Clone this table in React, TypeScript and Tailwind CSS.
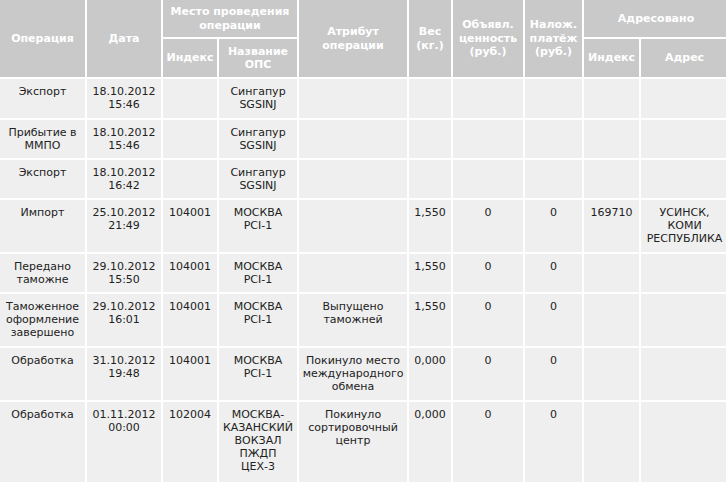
import React from "react";

type Row = { h: string; cells: string[] };

const rows: Row[] = [
  { h: "h-[39px]", cells: ["Экспорт", "18.10.2012\n15:46", "", "Сингапур\nSGSINJ", "", "", "", "", "", ""] },
  { h: "h-[38px]", cells: ["Прибытие в\nММПО", "18.10.2012\n15:46", "", "Сингапур\nSGSINJ", "", "", "", "", "", ""] },
  { h: "h-[38px]", cells: ["Экспорт", "18.10.2012\n16:42", "", "Сингапур\nSGSINJ", "", "", "", "", "", ""] },
  { h: "h-[52px]", cells: ["Импорт", "25.10.2012\n21:49", "104001", "МОСКВА\nPCI-1", "", "1,550", "0", "0", "169710", "УСИНСК,\nКОМИ\nРЕСПУБЛИКА"] },
  { h: "h-[37px]", cells: ["Передано\nтаможне", "29.10.2012\n15:50", "104001", "МОСКВА\nPCI-1", "", "1,550", "0", "0", "", ""] },
  { h: "h-[52px]", cells: ["Таможенное\nоформление\nзавершено", "29.10.2012\n16:01", "104001", "МОСКВА\nPCI-1", "Выпущено\nтаможней", "1,550", "0", "0", "", ""] },
  { h: "h-[52px]", cells: ["Обработка", "31.10.2012\n19:48", "104001", "МОСКВА\nPCI-1", "Покинуло место\nмеждународного\nобмена", "0,000", "0", "0", "", ""] },
  { h: "h-[80px]", cells: ["Обработка", "01.11.2012\n00:00", "102004", "МОСКВА-\nКАЗАНСКИЙ\nВОКЗАЛ\nПЖДП\nЦЕХ-3", "Покинуло\nсортировочный\nцентр", "0,000", "0", "0", "", ""] },
];

const th = "bg-[#c9c9c9] text-white font-bold text-center align-middle whitespace-pre p-0 leading-[13.5px]";
const td = "bg-[#efefef] text-[#222222] text-center align-top whitespace-pre px-0 pt-[6px] pb-[6px] leading-[13px]";

export default function App() {
  return (
    <div className="w-[726px] h-[483px] overflow-hidden bg-white" style={{ fontFamily: '"DejaVu Sans", Verdana, sans-serif' }}>
      <table className="table-fixed border-separate border-spacing-[2px] -ml-[2px] -mt-[2px] w-[732px] text-[11px]">
        <colgroup>
          <col className="w-[85px]" />
          <col className="w-[74px]" />
          <col className="w-[54px]" />
          <col className="w-[78px]" />
          <col className="w-[108px]" />
          <col className="w-[42px]" />
          <col className="w-[70px]" />
          <col className="w-[57px]" />
          <col className="w-[55px]" />
          <col className="w-[87px]" />
        </colgroup>
        <thead>
          <tr className="h-[37px]">
            <th rowSpan={2} className={th}>Операция</th>
            <th rowSpan={2} className={th}>Дата</th>
            <th colSpan={2} className={th}>{"Место проведения\nоперации"}</th>
            <th rowSpan={2} className={th}>{"Атрибут\nоперации"}</th>
            <th rowSpan={2} className={th}>{"Вес\n(кг.)"}</th>
            <th rowSpan={2} className={th}>{"Объявл.\nценность\n(руб.)"}</th>
            <th rowSpan={2} className={th}>{"Налож.\nплатёж\n(руб.)"}</th>
            <th colSpan={2} className={th}>Адресовано</th>
          </tr>
          <tr className="h-[38px]">
            <th className={th}>Индекс</th>
            <th className={th}>{"Название\nОПС"}</th>
            <th className={th}>Индекс</th>
            <th className={th}>Адрес</th>
          </tr>
        </thead>
        <tbody>
          {rows.map((r, i) => (
            <tr key={i} className={r.h}>
              {r.cells.map((c, j) => (
                <td key={j} className={td}>{c}</td>
              ))}
            </tr>
          ))}
        </tbody>
      </table>
    </div>
  );
}
